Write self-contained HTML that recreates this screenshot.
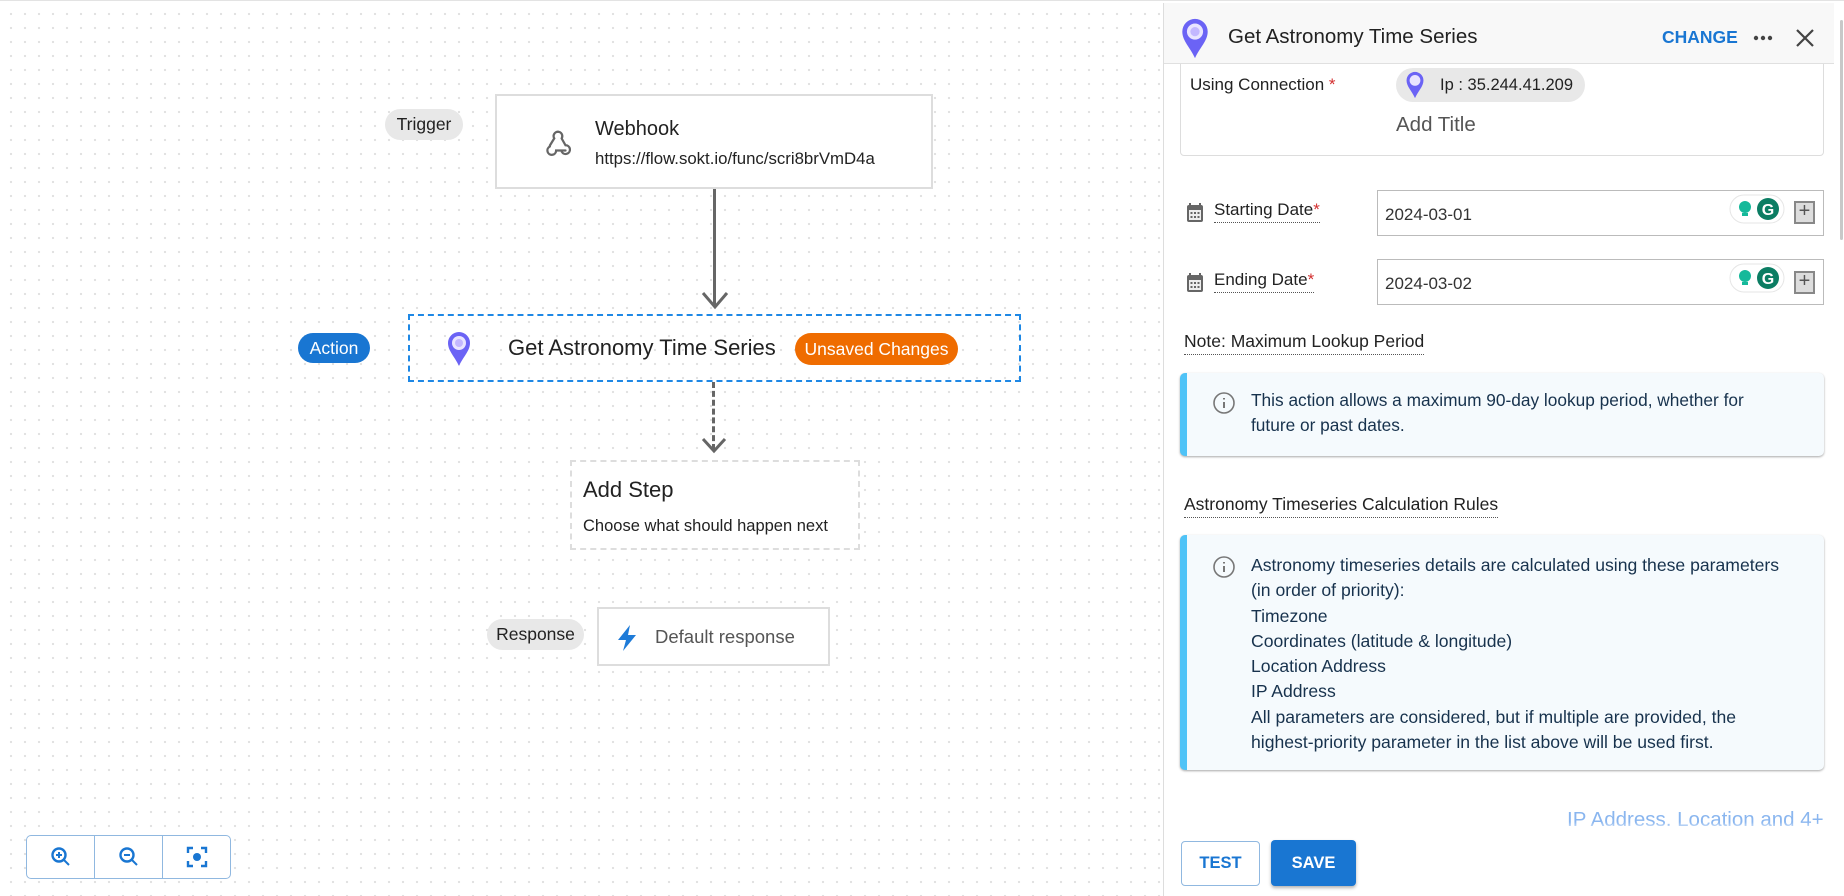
<!DOCTYPE html>
<html><head><meta charset="utf-8"><style>
*{box-sizing:border-box;margin:0;padding:0}
body{width:1844px;height:896px;overflow:hidden;font-family:"Liberation Sans",sans-serif;color:#222;background:#fff;position:relative}
.abs{position:absolute}
#canvas{position:absolute;left:0;top:3px;width:1163px;height:893px;background-image:radial-gradient(circle,#e0e0e0 1px,transparent 1.3px);background-size:14px 14px;background-position:4px 4px}
.chip{position:absolute;border-radius:16px;background:#e8e8e8;font-size:17.5px;display:flex;align-items:center;justify-content:center;color:#222}
.box{position:absolute;background:#fff;border:2px solid #ddd}
.lbl{font-size:17px;color:#222;border-bottom:1px dotted #555;display:inline-block;padding-bottom:2px}
.info{position:absolute;left:1180px;width:644px;background:#f5fafd;border-left:7px solid #4fc3f7;border-radius:5px;box-shadow:0 1px 2px rgba(0,0,0,.35);color:#17324d;font-size:17.3px;line-height:25px}
.input{position:absolute;left:1377px;width:447px;height:46px;border:1px solid #bbb;background:#fff;font-size:17px;color:#333;padding:14px 7px}
</style></head><body>
<div class="abs" style="left:0;top:0;width:1844px;height:3px;border-top:1px solid #e3e3e3"></div>
<div id="canvas"></div>

<!-- Trigger -->
<div class="chip" style="left:385px;top:109px;width:78px;height:31px">Trigger</div>
<div class="box" style="left:495px;top:94px;width:438px;height:95px">
<svg class="abs" style="left:46px;top:32px" width="30" height="30" viewBox="0 0 24 24" fill="none" stroke="#666" stroke-width="1.8" stroke-linecap="round"><path d="M12 3a3.5 3.5 0 0 0-3 5.3L5.5 14"/><path d="M15 8.5 L18 13.8a3.5 3.5 0 1 1-3 5.2"/><path d="M18 18H10.5a3.5 3.5 0 1 1-5-3.2"/><path d="M12 3a3.5 3.5 0 0 1 3 5.2"/></svg>
<div class="abs" style="left:98px;top:22px;font-size:20px">Webhook</div>
<div class="abs" style="left:98px;top:53px;font-size:16.8px">https://flow.sokt.io/func/scri8brVmD4a</div>
</div>
<div class="abs" style="left:713px;top:189px;width:3px;height:118px;background:#666"></div>
<svg class="abs" style="left:700px;top:290px" width="30" height="20"><path d="M3 3 L15 17 L27 3" fill="none" stroke="#666" stroke-width="3"/></svg>

<!-- Action -->
<div class="chip" style="left:298px;top:333px;width:72px;height:30px;background:#1976d2;color:#fff">Action</div>
<div class="abs" style="left:408px;top:314px;width:613px;height:68px;border:2px dashed #1e88e5"></div>
<svg class="abs" style="left:446px;top:331px" width="26" height="36" viewBox="0 0 26 36"><path d="M13 35 C9 26 2 20 2 12 A11 11 0 0 1 24 12 C24 20 17 26 13 35Z" fill="#6b63f5"/><circle cx="13" cy="12" r="7" fill="#e9e4ff"/><circle cx="13" cy="12" r="4" fill="#c3b7ff"/></svg>
<div class="abs" style="left:508px;top:335px;font-size:22px;color:#222">Get Astronomy Time Series</div>
<div class="abs" style="left:795px;top:333px;width:163px;height:32px;border-radius:16px;background:#ef6c00;color:#fff;font-size:17.5px;display:flex;align-items:center;justify-content:center">Unsaved Changes</div>

<div class="abs" style="left:712px;top:382px;height:68px;border-left:3px dashed #666"></div>
<svg class="abs" style="left:700px;top:436px" width="28" height="18"><path d="M3 3 L14 15 L25 3" fill="none" stroke="#666" stroke-width="3"/></svg>

<!-- Add step -->
<div class="abs" style="left:570px;top:460px;width:290px;height:90px;border:2px dashed #ddd;background:#fff">
<div class="abs" style="left:11px;top:15px;font-size:22px">Add Step</div>
<div class="abs" style="left:11px;top:55px;font-size:16.5px">Choose what should happen next</div>
</div>

<!-- Response -->
<div class="chip" style="left:487px;top:619px;width:97px;height:31px">Response</div>
<div class="box" style="left:597px;top:607px;width:233px;height:59px">
<svg class="abs" style="left:16px;top:15px" width="24" height="28" viewBox="0 0 24 28"><path d="M15 1 L3 16 H11 L8 27 L21 11 H13 Z" fill="#1e7bd8"/></svg>
<div class="abs" style="left:56px;top:17px;font-size:18.5px;color:#555">Default response</div>
</div>

<!-- zoom controls -->
<div class="abs" style="left:26px;top:835px;width:205px;height:44px;border:1px solid #90b8e0;border-radius:5px;background:#fff;display:flex">
<div style="flex:1;border-right:1px solid #90b8e0;display:flex;align-items:center;justify-content:center"><svg width="24" height="24" viewBox="0 0 24 24" fill="none" stroke="#1976d2" stroke-width="2.4"><circle cx="10" cy="10" r="6.5"/><path d="M15 15l5 5M10 7v6M7 10h6" stroke-width="2"/></svg></div>
<div style="flex:1;border-right:1px solid #90b8e0;display:flex;align-items:center;justify-content:center"><svg width="24" height="24" viewBox="0 0 24 24" fill="none" stroke="#1976d2" stroke-width="2.4"><circle cx="10" cy="10" r="6.5"/><path d="M15 15l5 5M7 10h6" stroke-width="2"/></svg></div>
<div style="flex:1;display:flex;align-items:center;justify-content:center"><svg width="24" height="24" viewBox="0 0 24 24" fill="none" stroke="#1976d2" stroke-width="2.4"><path d="M3 8V3h5M16 3h5v5M21 16v5h-5M8 21H3v-5"/><circle cx="12" cy="12" r="4" fill="#1976d2" stroke="none"/></svg></div>
</div>

<!-- Panel -->
<div class="abs" style="left:1163px;top:3px;width:681px;height:893px;border-left:1px solid #ddd;background:#fff"></div>
<div class="abs" style="left:1180px;top:50px;width:644px;height:106px;border:1px solid #ddd;border-radius:4px"></div>
<div class="abs" style="left:1190px;top:75px;font-size:17px">Using Connection <span style="color:#d32f2f">*</span></div>
<div class="abs" style="left:1396px;top:68px;width:189px;height:34px;border-radius:17px;background:#e8e8e8"></div>
<svg class="abs" style="left:1405px;top:71px" width="20" height="28" viewBox="0 0 26 36"><path d="M13 35 C9 26 2 20 2 12 A11 11 0 0 1 24 12 C24 20 17 26 13 35Z" fill="#6b63f5"/><circle cx="13" cy="12" r="7" fill="#e9e4ff"/></svg>
<div class="abs" style="left:1440px;top:76px;font-size:16.5px">Ip : 35.244.41.209</div>
<div class="abs" style="left:1396px;top:113px;font-size:20.5px;color:#555">Add Title</div>

<!-- header -->
<div class="abs" style="left:1164px;top:3px;width:670px;height:61px;background:#f8f8f8;border-bottom:1px solid #e0e0e0"></div>
<svg class="abs" style="left:1180px;top:17px" width="30" height="43" viewBox="0 0 26 36"><path d="M13 35 C9 26 2 20 2 12 A11 11 0 0 1 24 12 C24 20 17 26 13 35Z" fill="#6b63f5"/><circle cx="13" cy="12" r="7" fill="#e9e4ff"/><circle cx="13" cy="12" r="4" fill="#c3b7ff"/></svg>
<div class="abs" style="left:1228px;top:25px;font-size:20.5px;color:#222">Get Astronomy Time Series</div>
<div class="abs" style="left:1662px;top:27px;font-size:17.5px;color:#1976d2;font-weight:bold">CHANGE</div>
<svg class="abs" style="left:1753px;top:35px" width="20" height="6"><circle cx="3" cy="3" r="2.2" fill="#444"/><circle cx="10" cy="3" r="2.2" fill="#444"/><circle cx="17" cy="3" r="2.2" fill="#444"/></svg>
<svg class="abs" style="left:1795px;top:28px" width="20" height="20"><path d="M2 2L18 18M18 2L2 18" stroke="#444" stroke-width="2.2"/></svg>

<!-- dates -->
<svg class="abs" style="left:1186px;top:202px" width="18" height="21" viewBox="0 0 18 21"><rect x="1" y="3" width="16" height="17" rx="2" fill="#666"/><rect x="3" y="8" width="12" height="10" fill="#eee"/><path d="M4 1v4M14 1v4" stroke="#666" stroke-width="2"/><g fill="#666"><rect x="4.5" y="10" width="2" height="2"/><rect x="8" y="10" width="2" height="2"/><rect x="11.5" y="10" width="2" height="2"/><rect x="4.5" y="14" width="2" height="2"/><rect x="8" y="14" width="2" height="2"/><rect x="11.5" y="14" width="2" height="2"/></g></svg>
<div class="abs" style="left:1214px;top:200px"><span class="lbl">Starting Date<span style="color:#d32f2f">*</span></span></div>
<div class="input" style="top:190px">2024-03-01</div>
<svg class="abs" style="left:1729px;top:194px" width="56" height="30"><rect x="1" y="1" width="54" height="28" rx="14" fill="#fff" stroke="#e6e6e6"/><circle cx="16" cy="13" r="6" fill="#15b99a"/><rect x="13" y="19" width="6" height="3" fill="#15b99a"/><circle cx="39" cy="15" r="11" fill="#0b7d63"/><text x="39" y="21" font-size="16" font-weight="bold" fill="#fff" text-anchor="middle" font-family="Liberation Sans">G</text></svg>
<div class="abs" style="left:1794px;top:201px;width:21px;height:23px;border:2px solid #888;background:#ddd;color:#555;font-size:20px;line-height:17px;text-align:center">+</div>

<svg class="abs" style="left:1186px;top:272px" width="18" height="21" viewBox="0 0 18 21"><rect x="1" y="3" width="16" height="17" rx="2" fill="#666"/><rect x="3" y="8" width="12" height="10" fill="#eee"/><path d="M4 1v4M14 1v4" stroke="#666" stroke-width="2"/><g fill="#666"><rect x="4.5" y="10" width="2" height="2"/><rect x="8" y="10" width="2" height="2"/><rect x="11.5" y="10" width="2" height="2"/><rect x="4.5" y="14" width="2" height="2"/><rect x="8" y="14" width="2" height="2"/><rect x="11.5" y="14" width="2" height="2"/></g></svg>
<div class="abs" style="left:1214px;top:270px"><span class="lbl">Ending Date<span style="color:#d32f2f">*</span></span></div>
<div class="input" style="top:259px">2024-03-02</div>
<svg class="abs" style="left:1729px;top:263px" width="56" height="30"><rect x="1" y="1" width="54" height="28" rx="14" fill="#fff" stroke="#e6e6e6"/><circle cx="16" cy="13" r="6" fill="#15b99a"/><rect x="13" y="19" width="6" height="3" fill="#15b99a"/><circle cx="39" cy="15" r="11" fill="#0b7d63"/><text x="39" y="21" font-size="16" font-weight="bold" fill="#fff" text-anchor="middle" font-family="Liberation Sans">G</text></svg>
<div class="abs" style="left:1794px;top:271px;width:21px;height:23px;border:2px solid #888;background:#ddd;color:#555;font-size:20px;line-height:17px;text-align:center">+</div>

<div class="abs" style="left:1184px;top:331px"><span class="lbl" style="font-size:17.5px">Note: Maximum Lookup Period</span></div>
<div class="info" style="top:373px;height:83px;padding:15px 0 0 64px">
<svg class="abs" style="left:25px;top:18px" width="24" height="24" viewBox="0 0 24 24" fill="none" stroke="#777" stroke-width="1.6"><circle cx="12" cy="12" r="10"/><path d="M12 11v6M12 7v1.5" stroke-width="2"/></svg>
This action allows a maximum 90-day lookup period, whether for<br>future or past dates.</div>

<div class="abs" style="left:1184px;top:494px"><span class="lbl" style="font-size:17.5px">Astronomy Timeseries Calculation Rules</span></div>
<div class="info" style="top:535px;height:235px;padding:18px 0 0 64px;line-height:25.3px;font-size:17.6px">
<svg class="abs" style="left:25px;top:20px" width="24" height="24" viewBox="0 0 24 24" fill="none" stroke="#777" stroke-width="1.6"><circle cx="12" cy="12" r="10"/><path d="M12 11v6M12 7v1.5" stroke-width="2"/></svg>
Astronomy timeseries details are calculated using these parameters<br>(in order of priority):<br>Timezone<br>Coordinates (latitude &amp; longitude)<br>Location Address<br>IP Address<br>All parameters are considered, but if multiple are provided, the<br>highest-priority parameter in the list above will be used first.</div>

<div class="abs" style="left:1567px;top:808px;height:18px;overflow:hidden;font-size:20.5px;line-height:24px;color:#8ab6ef;white-space:nowrap">IP Address, Location and 4+</div>
<div class="abs" style="left:1560px;top:822px;width:270px;height:10px;background:linear-gradient(#fff0,#fff)"></div>

<div class="abs" style="left:1181px;top:841px;width:79px;height:45px;border:1px solid #90b8e0;border-radius:4px;color:#1976d2;font-weight:bold;font-size:16.5px;display:flex;align-items:center;justify-content:center">TEST</div>
<div class="abs" style="left:1271px;top:840px;width:85px;height:46px;background:#1976d2;border-radius:4px;color:#fff;font-weight:bold;font-size:16.5px;display:flex;align-items:center;justify-content:center;box-shadow:0 2px 3px rgba(0,0,0,.3)">SAVE</div>

<div class="abs" style="left:1840px;top:20px;width:3px;height:220px;background:#c8c8c8;border-radius:2px"></div>
</body></html>
